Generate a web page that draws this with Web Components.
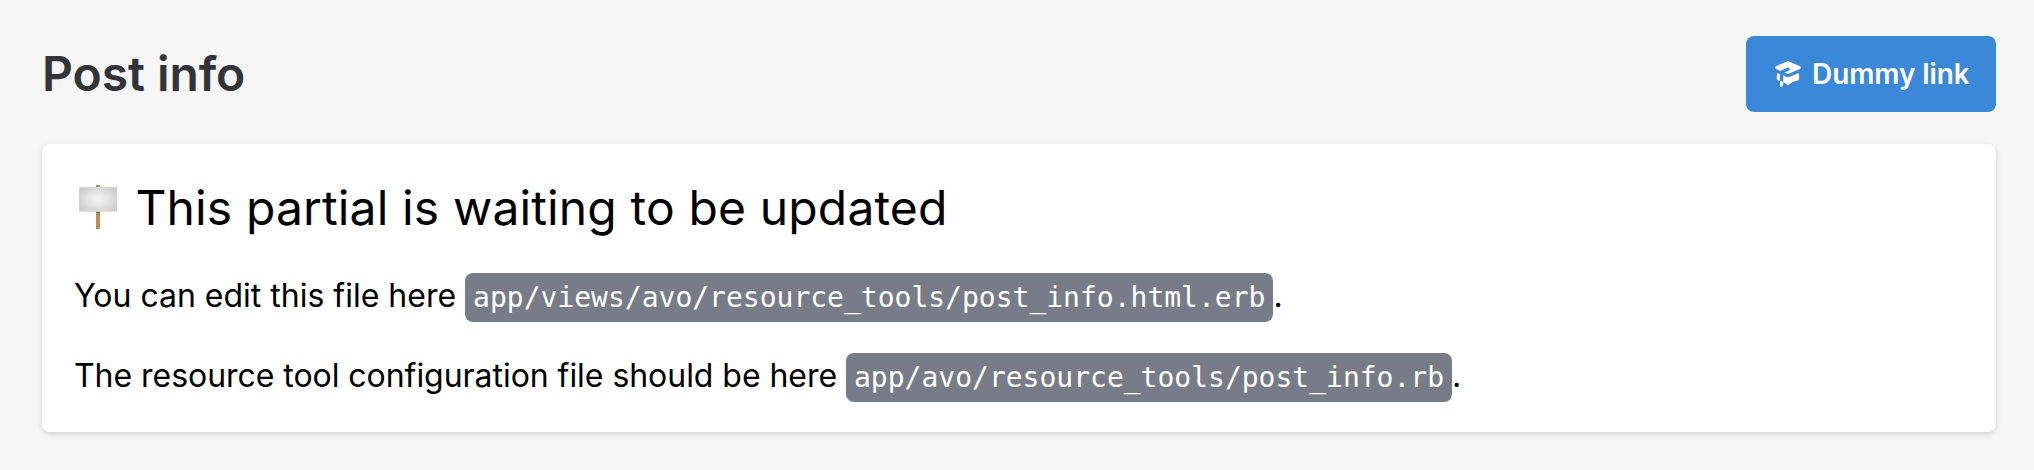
<!DOCTYPE html>
<html lang="en">
<head>
<meta charset="utf-8">
<title>Post info</title>
<style>
body { margin: 0; background: #f6f6f6; font-family: Inter, "Liberation Sans", sans-serif; color: #000; }
</style>
</head>
<body>
<tool-panel>
  <span slot="title">Post info</span>
  <action-link slot="actions">Dummy link</action-link>
  <info-card>
    <span slot="heading">This partial is waiting to be updated</span>
    <text-line>You can edit this file here <code-pill>app/views/avo/resource_tools/post_info.html.erb</code-pill>.</text-line>
    <text-line style="letter-spacing: -.043px">The resource tool configuration file should be here <code-pill>app/avo/resource_tools/post_info.rb</code-pill>.</text-line>
  </info-card>
</tool-panel>
<script>
const define = (name, html) => customElements.define(name, class extends HTMLElement {
  constructor() {
    super();
    this.attachShadow({ mode: 'open' }).innerHTML = html;
  }
});

define('tool-panel', `
  <style>
    :host { display: block; box-sizing: border-box; height: 470px; padding: 36px 38px 0 42px; }
    header { display: flex; align-items: center; justify-content: space-between; height: 76px; margin-bottom: 32px; }
    h1 { margin: 0; font-size: 48px; line-height: 60px; font-weight: 600; letter-spacing: -.07px; color: #32343a; white-space: nowrap; }
  </style>
  <header><h1><slot name="title"></slot></h1><slot name="actions"></slot></header>
  <slot></slot>`);

define('action-link', `
  <style>
    :host { display: flex; align-items: center; gap: 8px; box-sizing: border-box; width: 250px; height: 76px; padding: 0 26px;
      border-radius: 8px; background: #3b87d8; color: #fff; font-size: 28px; font-weight: 600; line-height: 40px;
      letter-spacing: -.09px; white-space: nowrap; }
    svg { width: 32px; height: 32px; flex: none; }
  </style>
  <svg viewBox="0 0 20 20" fill="currentColor"><path d="M10.394 2.08a1 1 0 00-.788 0l-7 3a1 1 0 000 1.84L5.25 8.051a.999.999 0 01.356-.257l4-1.714a1 1 0 11.788 1.838L7.667 9.088l1.94.831a1 1 0 00.787 0l7-3a1 1 0 000-1.838l-7-3zM3.31 9.397L5 10.12v4.102a8.969 8.969 0 00-1.05-.174 1 1 0 01-.89-.89 11.115 11.115 0 01.25-3.762zM9.3 16.573A9.026 9.026 0 007 14.935v-3.957l1.818.78a3 3 0 002.364 0l5.508-2.361a11.026 11.026 0 01.25 3.762 1 1 0 01-.89.89 8.968 8.968 0 00-5.35 2.524 1 1 0 01-1.4 0zM6 18a1 1 0 001-1v-2.065a8.935 8.935 0 00-2-.712V17a1 1 0 001 1z"/></svg>
  <span><slot></slot></span>`);

define('info-card', `
  <style>
    :host { display: flex; flex-direction: column; gap: 32px; box-sizing: border-box; padding: 32px; border-radius: 8px; background: #fff;
      box-shadow: 0 2px 6px rgba(0,0,0,.1), 0 2px 4px rgba(0,0,0,.06); }
    h2 { display: flex; align-items: center; gap: 13.4px; margin: 0; font-size: 48px; line-height: 64px; font-weight: 400;
      letter-spacing: .14px; white-space: nowrap; }
    svg { width: 48px; height: 48px; flex: none; }
  </style>
  <h2>
    <svg viewBox="0 0 48 48">
      <defs>
        <radialGradient id="board" r=".6">
          <stop offset="0" stop-color="#f3f3f3"/><stop offset=".45" stop-color="#e4e4e4"/><stop offset="1" stop-color="#cbcbcb"/>
        </radialGradient>
      </defs>
      <rect x="22" y="1" width="4" height="44" fill="#b78e56"/>
      <rect x="22" y="27" width="4" height="2" fill="#8e6b43"/>
      <rect x="5" y="3" width="38" height="24.5" fill="url(#board)"/>
      <path d="M5 3.5h38M5 27h38" stroke="#d9d9d9" stroke-width="1"/>
    </svg>
    <slot name="heading"></slot>
  </h2>
  <slot></slot>`);

define('text-line', `
  <style>:host { display: block; font-size: 32px; line-height: 48px; white-space: nowrap; }</style>
  <slot></slot>`);

define('code-pill', `
  <style>
    :host { display: inline; padding: 8px; border-radius: 8px; background: #777c88; color: #fff; letter-spacing: 0;
      font-family: "DejaVu Sans Mono", "Liberation Mono", monospace; font-size: 28px; line-height: 1; }
  </style><slot></slot>`);
</script>
</body>
</html>
